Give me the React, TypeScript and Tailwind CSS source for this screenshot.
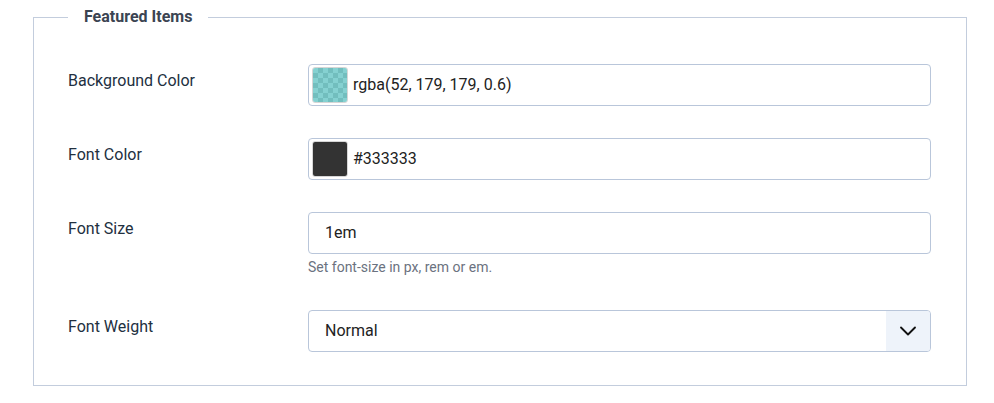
import { ChevronDown } from "lucide-react";

const font = { fontFamily: "Roboto, 'Liberation Sans', sans-serif" };

function ColorInput({ swatch, value }: { swatch: "teal" | "dark"; value: string }) {
  return (
    <div className="flex h-[42px] w-full items-center rounded-[4px] border border-[#b9c6da] bg-white pl-[3px]">
      <div className="relative h-[36px] w-[36px] overflow-hidden rounded-[3px] border border-[#d6d6d6] bg-[repeating-conic-gradient(#cfcfcf_0_25%,#ffffff_0_50%)] bg-[length:10px_10px]">
        {swatch === "teal" ? (
          <div className="absolute inset-0 bg-[rgba(52,179,179,0.6)]" />
        ) : (
          <div className="absolute inset-0 bg-[#333333]" />
        )}
      </div>
      <span className="ml-[5px] text-[16px] text-[#222]">{value}</span>
    </div>
  );
}

export default function App() {
  return (
    <div className="bg-white w-[994px] h-[403px] pl-[33px] pr-[27px]" style={font}>
      <fieldset className="mt-[7px] border border-[#c3cddd] pl-[34px] pr-[35px] pb-[33px] pt-[37px]">
        <legend className="px-4 text-[16px] leading-[20px] font-bold text-[#3b4452]">
          Featured Items
        </legend>

        <div className="flex flex-col gap-8">
          <div className="flex">
            <label className="w-[240px] shrink-0 pt-[5px] text-[16px] leading-[24px] text-[#22303f]">Background Color</label>
            <ColorInput swatch="teal" value="rgba(52, 179, 179, 0.6)" />
          </div>

          <div className="flex">
            <label className="w-[240px] shrink-0 pt-[5px] text-[16px] leading-[24px] text-[#22303f]">Font Color</label>
            <ColorInput swatch="dark" value="#333333" />
          </div>

          <div className="flex">
            <label className="w-[240px] shrink-0 pt-[5px] text-[16px] leading-[24px] text-[#22303f]">Font Size</label>
            <div className="w-full">
              <div className="flex h-[42px] items-center rounded-[4px] border border-[#b9c6da] px-4 text-[16px] text-[#222]">
                1em
              </div>
              <p className="mt-[2px] text-[14px] leading-[22px] text-[#6b7280]">Set font-size in px, rem or em.</p>
            </div>
          </div>

          <div className="flex">
            <label className="w-[240px] shrink-0 pt-[5px] text-[16px] leading-[24px] text-[#22303f]">Font Weight</label>
            <div className="flex h-[42px] w-full items-stretch overflow-hidden rounded-[4px] border border-[#b9c6da]">
              <div className="flex flex-1 items-center px-4 text-[16px] text-[#222]">Normal</div>
              <div className="flex w-[44px] items-center justify-center bg-[#eef3fa]">
                <ChevronDown size={28} strokeWidth={1.6} className="text-[#111]" />
              </div>
            </div>
          </div>
        </div>
      </fieldset>
    </div>
  );
}
